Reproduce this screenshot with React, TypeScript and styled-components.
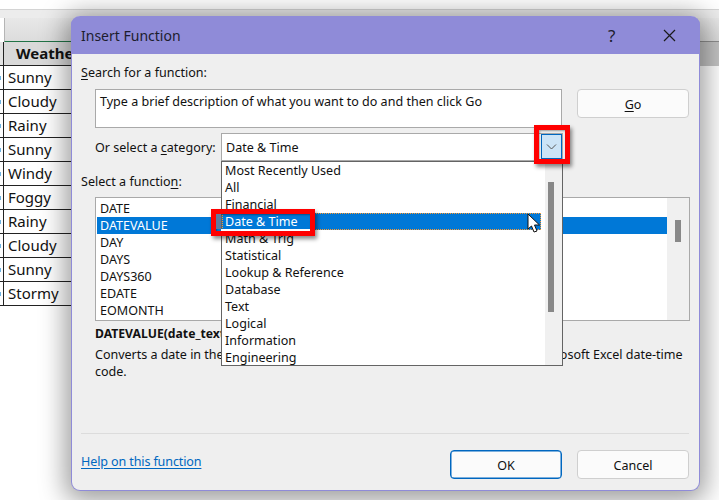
import React from 'react'
import styled, { createGlobalStyle } from 'styled-components'

const GlobalStyle = createGlobalStyle`
	html, body {
		margin: 0;
		padding: 0;
		width: 719px;
		height: 500px;
		overflow: hidden;
		background: #ffffff;
		font-family: 'Noto Sans', 'Open Sans', sans-serif;
		color: #111111;
	}
	u { text-underline-offset: 2px; text-decoration-thickness: 1px; }
`

const weather = ['Sunny', 'Cloudy', 'Rainy', 'Sunny', 'Windy', 'Foggy', 'Rainy', 'Cloudy', 'Sunny', 'Stormy']
const categories = ['Most Recently Used', 'All', 'Financial', 'Date & Time', 'Math & Trig', 'Statistical', 'Lookup & Reference', 'Database', 'Text', 'Logical', 'Information', 'Engineering']
const functions = ['DATE', 'DATEVALUE', 'DAY', 'DAYS', 'DAYS360', 'EDATE', 'EOMONTH']

const Page = styled('div')`
	position: relative;
	width: 719px;
	height: 500px;
	overflow: hidden;
	background: #ffffff;
`

const Sheet = styled('div')`
	display: flex;
	flex-direction: column;
	padding-top: 9px;
`

const Ribbon = styled('div')`
	height: 8px;
	border-top: 1px solid #d4d4d4;
	background: #ececec;
`

const ColumnBar = styled('div')`
	height: 23px;
	margin-left: 4px;
	border-left: 1px solid #b5b5b5;
	background: linear-gradient(#e8e8e8, #dcdcdc);
	border-bottom: 1px solid #217346;
`

const Cols = styled('div')`
	display: grid;
	grid-template-columns: 4px 120px 1fr;
`

const RowHead = styled('div')<{ $marked?: boolean }>`
	height: 23px;
	background: ${p => (p.$marked ? '#ffffff' : '#e4e4e4')};
	border-right: 1px solid #222222;
	border-bottom: 1px solid #222222;
	position: relative;

	${p =>
		p.$marked
			? `
		&::after {
			content: '';
			position: absolute;
			left: 0;
			top: 10px;
			width: 1px;
			height: 4px;
			background: #6cb4e4;
		}
	`
			: ''}
`

const HeaderCell = styled('div')`
	height: 23px;
	border-bottom: 1px solid #222222;
	background: #d9d9d9;
	font: 700 15px/23px 'Noto Sans', sans-serif;
	padding-left: 12px;
	white-space: nowrap;
	overflow: hidden;
`

const Cell = styled('div')`
	height: 23px;
	border-bottom: 1px solid #222222;
	font-size: 15px;
	line-height: 23px;
	padding-left: 4px;
`

const Blank = styled('div')`
	background: #ffffff;
`

const RightGrayBlock = styled('div')`
	position: absolute;
	left: 700px;
	top: 41px;
	width: 19px;
	height: 24px;
	border-top: 1px solid #8f8f8f;
	background: #c4c4c4;
`

const Dialog = styled('div')`
	position: absolute;
	left: 71px;
	top: 16px;
	width: 629px;
	height: 475px;
	box-sizing: border-box;
	display: flex;
	flex-direction: column;
	background: #efefef;
	border: 1px solid #8f8bd8;
	border-top: none;
	border-radius: 9px;
	box-shadow: 0 4px 26px 6px rgba(0, 0, 0, 0.38);
	font-size: 12.55px;
	line-height: 17px;
`

const TitleBar = styled('div')`
	height: 38px;
	flex: none;
	margin: 0 -1px;
	display: flex;
	align-items: center;
	padding-left: 10px;
	background: #8f8bd8;
	border-radius: 9px 9px 0 0;
	font-size: 14px;
	color: #1d1d2e;
`

const TitleText = styled('span')`
	flex: 1;
`

const HelpMark = styled('span')`
	width: 55px;
	font-size: 17px;
`

const CloseIcon = styled('svg')`
	width: 13px;
	height: 13px;
	margin-right: 24px;
`

const Body = styled('div')`
	flex: 1;
	display: flex;
	flex-direction: column;
	padding: 10px 10px 0 9px;
`

const Label = styled('div')<{ $gap?: number }>`
	height: 17px;
	margin-top: ${p => p.$gap ?? 0}px;
`

const SearchRow = styled('div')`
	display: flex;
	gap: 15px;
	margin: 8px 0 0 14px;
	align-items: flex-start;
`

const SearchBox = styled('div')`
	width: 467px;
	height: 39px;
	box-sizing: border-box;
	border: 1px solid #a9a9a9;
	background: #ffffff;
	padding: 3px 4px;
`

const Button = styled('div')<{ $primary?: boolean }>`
	width: 112px;
	height: 29px;
	box-sizing: border-box;
	padding-top: 1px;
	display: flex;
	align-items: center;
	justify-content: center;
	background: #fbfbfb;
	border-radius: 4px;
	border: 1px solid ${p => (p.$primary ? '#0067c0' : '#cfcfcf')};
	${p => (p.$primary ? 'box-shadow: inset 0 0 0 0.5px #0067c0;' : '')}
`

const CategoryRow = styled('div')`
	display: flex;
	align-items: center;
	margin: 5px 0 0 14px;
`

const CategoryLabel = styled('div')`
	width: 126px;
`

const SelectBox = styled('div')`
	position: relative;
	width: 342px;
	height: 28px;
	box-sizing: border-box;
	background: #ffffff;
	border: 1px solid #a9a9a9;
	padding: 5px 4px;
`

const ArrowButton = styled('div')`
	position: absolute;
	right: 0;
	top: 0;
	width: 21px;
	height: 25px;
	box-sizing: border-box;
	border: 1px solid #0067c0;
	background: #cce4f7;
	display: flex;
	align-items: center;
	justify-content: center;
`

const Callout = styled('div')`
	position: absolute;
	box-sizing: border-box;
	border: 5px solid #ff0000;
	box-shadow: 2px 3px 4px rgba(0, 0, 0, 0.45), inset 1px 1px 2px rgba(0, 0, 0, 0.35);
	pointer-events: none;
`

const ArrowCallout = styled(Callout)`
	left: 312px;
	top: -9px;
	width: 36px;
	height: 39px;
	z-index: 3;
`

const ItemCallout = styled(Callout)`
	left: -11px;
	top: 47px;
	width: 104px;
	height: 27px;

	&::before {
		content: '';
		position: absolute;
		left: 0;
		top: 0;
		width: 5px;
		height: 15px;
		background: #5f7b9f;
	}

	&::after {
		content: '';
		position: absolute;
		left: 5px;
		right: 0;
		bottom: 0;
		height: 2px;
		background: #ffffff;
	}
`

const Dropdown = styled('div')`
	position: absolute;
	left: -1px;
	top: 27px;
	width: 342px;
	height: 205px;
	box-sizing: border-box;
	display: flex;
	background: #ffffff;
	border: 1px solid #646464;
	z-index: 2;
`

const DropList = styled('div')`
	position: relative;
	flex: 1;
	min-width: 0;
	padding-right: 4px;
`

const DropItem = styled('div')<{ $active?: boolean }>`
	height: 17px;
	box-sizing: border-box;
	padding-left: 3px;
	white-space: nowrap;
	${p =>
		p.$active
			? `
		background: #0078d7;
		color: #ffffff;
		outline: 1px dotted #ff9a2e;
		outline-offset: -1px;
	`
			: ''}
`

const DropTrack = styled('div')`
	width: 17px;
	flex: none;
	background: #f0f0f0;
	padding: 20px 0 0 3px;
	box-sizing: border-box;
`

const DropThumb = styled('div')`
	width: 6px;
	height: 130px;
	background: #888888;
`

const Pointer = styled('svg')`
	position: absolute;
	left: 305px;
	top: 51px;
	width: 14px;
	height: 21px;
`

const FunctionBox = styled('div')`
	margin: 7px 0 0 14px;
	width: 595px;
	height: 124px;
	box-sizing: border-box;
	display: flex;
	background: #ffffff;
	border: 1px solid #a9a9a9;
`

const FunctionList = styled('div')`
	flex: 1;
	padding: 2px 0 0 1px;
`

const FunctionItem = styled('div')<{ $active?: boolean }>`
	height: 17px;
	padding-left: 3px;
	${p => (p.$active ? 'background: #0078d7; color: #ffffff;' : '')}
`

const FunctionTrack = styled('div')`
	width: 22px;
	flex: none;
	background: #f0f0f0;
	padding: 22px 0 0 8px;
	box-sizing: border-box;
`

const FunctionThumb = styled('div')`
	width: 6px;
	height: 22px;
	background: #888888;
`

const Signature = styled('div')`
	margin: 4px 0 0 14px;
	font-weight: 700;
	font-size: 12.2px;
`

const Description = styled('div')`
	margin: 4px 0 0 14px;
	width: 595px;
	letter-spacing: -0.03px;
`

const Spacer = styled('div')`
	flex: 1;
`

const Divider = styled('div')`
	height: 1px;
	background: #dcdcdc;
`

const Footer = styled('div')`
	display: flex;
	align-items: center;
	gap: 15px;
	height: 56px;
	padding-bottom: 11px;
	box-sizing: border-box;
	padding-top: 16px;
`

const HelpLink = styled('a')`
	flex: 1;
	color: #0067c0;
	text-decoration: underline;
	text-underline-offset: 2px;
	padding-bottom: 6px;
	letter-spacing: -0.12px;
`

const App = () => {
	return (
		<Page>
			<GlobalStyle />
			<Sheet>
				<Ribbon />
				<ColumnBar />
				<Cols>
					<RowHead />
					<HeaderCell>Weather</HeaderCell>
					<Blank />
					{weather.map((w, i) => (
						<React.Fragment key={i}>
							<RowHead $marked />
							<Cell>{w}</Cell>
							<Blank />
						</React.Fragment>
					))}
				</Cols>
			</Sheet>
			<RightGrayBlock />
			<Dialog>
				<TitleBar>
					<TitleText>Insert Function</TitleText>
					<HelpMark>?</HelpMark>
					<CloseIcon viewBox="0 0 13 13">
						<path d="M1 1 L12 12 M12 1 L1 12" stroke="#1a1a1a" strokeWidth="1.2" fill="none" />
					</CloseIcon>
				</TitleBar>
				<Body>
					<Label><u>S</u>earch for a function:</Label>
					<SearchRow>
						<SearchBox>Type a brief description of what you want to do and then click Go</SearchBox>
						<Button><span><u>G</u>o</span></Button>
					</SearchRow>
					<CategoryRow>
						<CategoryLabel>Or select a <u>c</u>ategory:</CategoryLabel>
						<SelectBox>
							Date &amp; Time
							<ArrowButton>
								<svg width="11" height="6" viewBox="0 0 11 6">
									<path d="M1 0.5 L5.5 5 L10 0.5" stroke="#555555" strokeWidth="1" fill="none" />
								</svg>
							</ArrowButton>
							<Dropdown>
								<DropList>
									{categories.map(c => (
										<DropItem key={c} $active={c === 'Date & Time'}>{c}</DropItem>
									))}
									<ItemCallout />
									<Pointer viewBox="0 0 14 21">
										<path d="M1 1 L1 16 L4.5 13 L7 19 L10 18 L7.5 12 L12.5 12 Z" fill="#ffffff" stroke="#111111" strokeWidth="1" />
									</Pointer>
								</DropList>
								<DropTrack><DropThumb /></DropTrack>
							</Dropdown>
							<ArrowCallout />
						</SelectBox>
					</CategoryRow>
					<Label $gap={12}>Select a functio<u>n</u>:</Label>
					<FunctionBox>
						<FunctionList>
							{functions.map(f => (
								<FunctionItem key={f} $active={f === 'DATEVALUE'}>{f}</FunctionItem>
							))}
						</FunctionList>
						<FunctionTrack><FunctionThumb /></FunctionTrack>
					</FunctionBox>
					<Signature>DATEVALUE(date_text)</Signature>
					<Description>
						Converts a date in the form of text to a number that represents the date in Microsoft Excel date-time code.
					</Description>
					<Spacer />
					<Divider />
					<Footer>
						<HelpLink>Help on this function</HelpLink>
						<Button $primary>OK</Button>
						<Button>Cancel</Button>
					</Footer>
				</Body>
			</Dialog>
		</Page>
	)
}

export default App
